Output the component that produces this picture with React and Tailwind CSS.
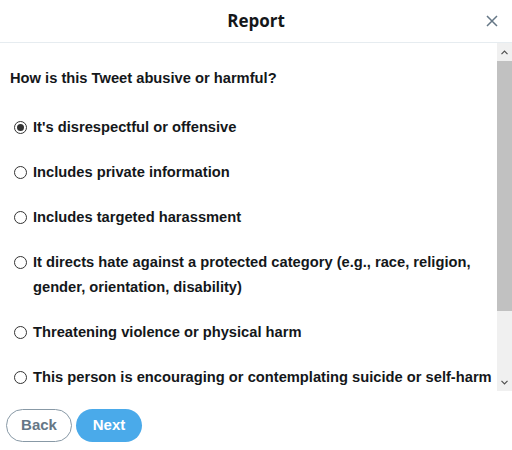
import React, { useState } from 'react';

const options = [
  "It's disrespectful or offensive",
  'Includes private information',
  'Includes targeted harassment',
  'It directs hate against a protected category (e.g., race, religion, gender, orientation, disability)',
  'Threatening violence or physical harm',
  'This person is encouraging or contemplating suicide or self-harm',
];

const Radio = ({ checked }) => (
  <span className="mt-[6px] flex h-[13px] w-[13px] shrink-0 items-center justify-center rounded-full border border-[#333] bg-white">
    {checked && <span className="h-[7px] w-[7px] rounded-full bg-[#333]" />}
  </span>
);

export default function App() {
  const [selected, setSelected] = useState(0);

  return (
    <div className="flex h-[450px] w-[512px] flex-col bg-white text-[#14171a]" style={{ fontFamily: '"Liberation Sans", Arial, sans-serif' }}>
      {/* header */}
      <div className="flex h-[43px] shrink-0 items-center border-b border-[#e6ecf0] pl-[28px] pr-[12px]">
        <div className="flex-1 text-center text-[17px] font-bold text-[#14171a]" style={{ fontFamily: '"Open Sans", "Noto Sans", sans-serif' }}>
          Report
        </div>
        <button className="flex h-[16px] w-[16px] items-center justify-center text-[#657786]">
          <svg width="12" height="12" viewBox="0 0 12 12" fill="none" stroke="currentColor" strokeWidth="1.5">
            <path d="M1 1l10 10M11 1L1 11" />
          </svg>
        </button>
      </div>

      {/* body with fake scrollbar */}
      <div className="flex h-[348px] shrink-0">
        <div className="flex-1 overflow-hidden pl-[10px] pr-[4px] pt-[23px]">
          <div className="text-[14.7px] font-bold leading-[25px]">How is this Tweet abusive or harmful?</div>
          <div className="mt-[24px] flex flex-col gap-[20px]">
            {options.map((o, i) => (
              <label key={i} className="flex cursor-pointer items-start gap-[6px] pl-[4px]" onClick={() => setSelected(i)}>
                <Radio checked={selected === i} />
                <span className="text-[14.7px] font-bold leading-[25px]">{o}</span>
              </label>
            ))}
          </div>
        </div>
        <div className="flex w-[15px] shrink-0 flex-col bg-[#f0f0f0]">
          <div className="flex h-[18px] items-center justify-center text-[#505050]">
            <svg width="7" height="5" viewBox="0 0 7 5" fill="none" stroke="currentColor" strokeWidth="1.2">
              <path d="M0.5 4.2L3.5 1.2L6.5 4.2" />
            </svg>
          </div>
          <div className="flex-1">
            <div className="h-[250px] bg-[#c1c1c1]" />
          </div>
          <div className="flex h-[17px] items-center justify-center text-[#505050]">
            <svg width="7" height="5" viewBox="0 0 7 5" fill="none" stroke="currentColor" strokeWidth="1.2">
              <path d="M0.5 0.8L3.5 3.8L6.5 0.8" />
            </svg>
          </div>
        </div>
      </div>

      {/* footer */}
      <div className="flex gap-[4px] pl-[6px] pt-[18px]">
        <button className="h-[33px] w-[66px] rounded-full border border-[#8899a6] text-[15px] font-bold text-[#657786]">
          Back
        </button>
        <button className="h-[33px] w-[66px] rounded-full bg-[#4aaaea] text-[15px] font-bold text-white">
          Next
        </button>
      </div>
    </div>
  );
}
